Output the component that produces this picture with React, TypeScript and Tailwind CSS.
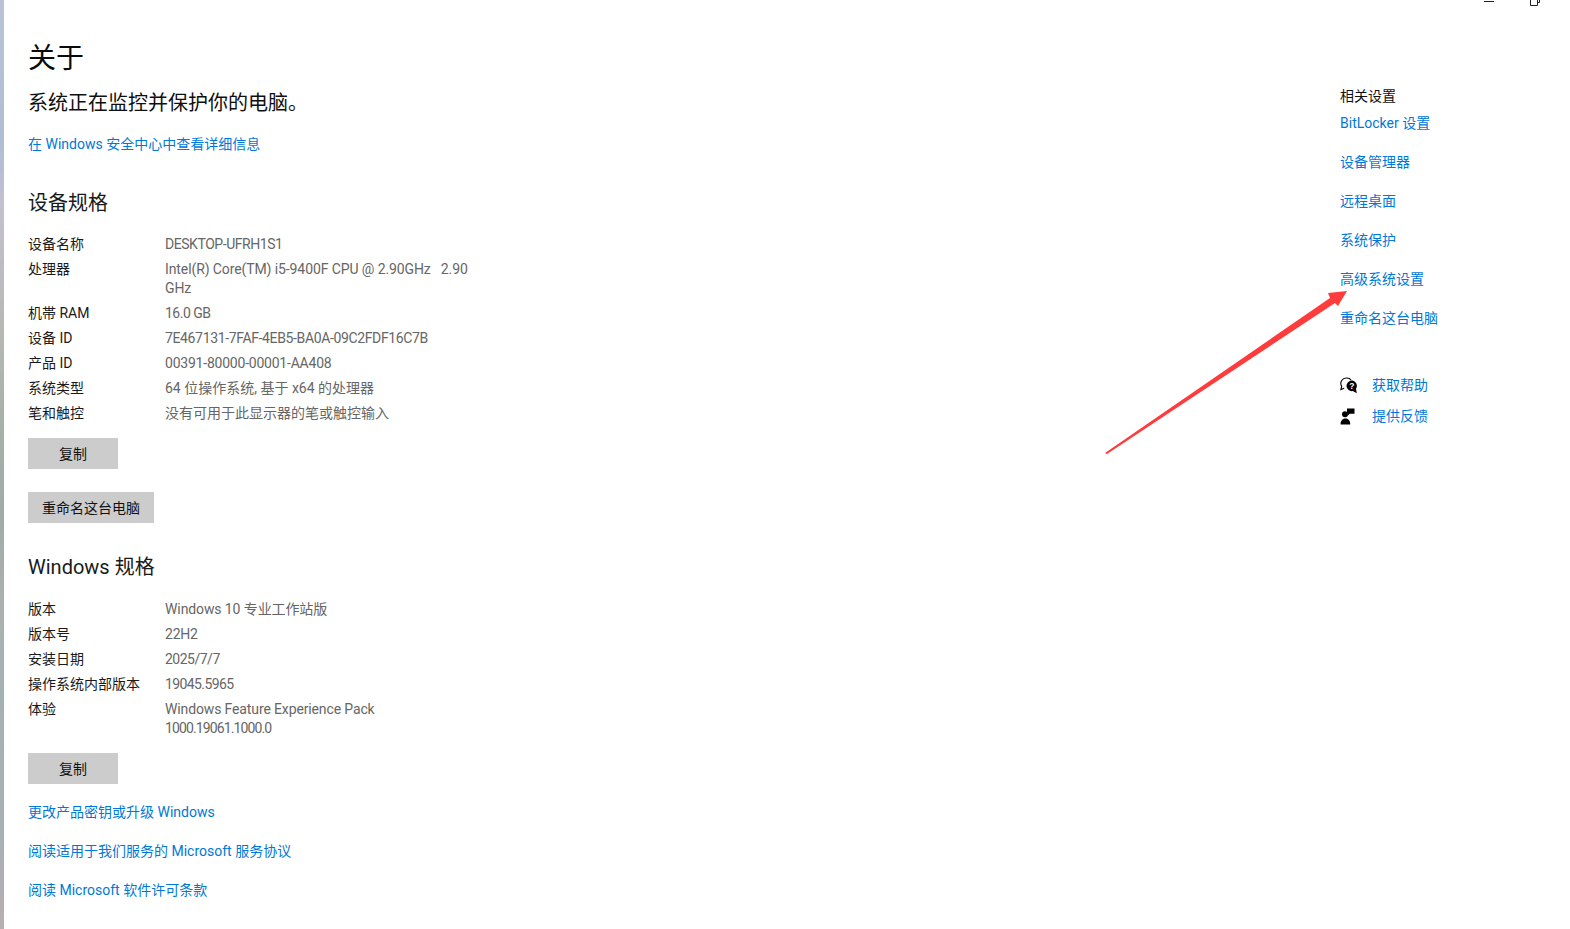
const font = { fontFamily: 'Roboto, "Noto Sans CJK SC", sans-serif' };

function Row({ k, v, track = "" }: { k: string; v: React.ReactNode; track?: string }) {
  return (
    <div className="flex text-[14px] leading-[19px] mb-[6px]">
      <div className="w-[137px] shrink-0 text-[#1a1a1a]">{k}</div>
      <div className={"w-[310px] whitespace-pre-wrap text-[#666666] " + track}>{v}</div>
    </div>
  );
}

function Link({ children, className = "" }: { children: React.ReactNode; className?: string }) {
  return <div className={"text-[14px] leading-[19px] text-[#0078d7] " + className}>{children}</div>;
}

function Btn({ children, className = "" }: { children: React.ReactNode; className?: string }) {
  return (
    <div className={"h-[31px] bg-[#cccccc] flex items-center justify-center pt-[2px] text-[14px] text-[#111111] " + className}>
      {children}
    </div>
  );
}

export default function App() {
  return (
    <div style={font} className="relative h-[929px] w-full overflow-hidden bg-white flex">
      <div className="w-1 shrink-0 bg-[linear-gradient(to_bottom,#b9c3d3_0%,#afbdd6_15%,#c4c0cf_22%,#b8b8b6_35%,#a6b2aa_45%,#a1aaa8_55%,#adb0b0_65%,#a4b1b2_75%,#a9b0b4_90%,#b7aeb2_100%)]" />
      <main className="flex-1 pl-6 pt-[39px]">
        <h1 className="text-[28px] leading-[40px] text-[#0a0a0a]">关于</h1>
        <p className="mt-[11px] text-[20px] leading-[27px] text-[#0f0f0f]">系统正在监控并保护你的电脑。</p>
        <Link className="mt-[18px]">在 Windows 安全中心中查看详细信息</Link>
        <h2 className="mt-[36px] text-[20px] leading-[27px] text-[#1a1a1a]">设备规格</h2>
        <div className="mt-[18px]">
          <Row k="设备名称" v="DESKTOP-UFRH1S1" track="tracking-[-0.45px]" />
          <Row k="处理器" v="Intel(R) Core(TM) i5-9400F CPU @ 2.90GHz   2.90 GHz" track="tracking-[-0.1px]" />
          <Row k="机帯 RAM" v="16.0 GB" track="tracking-[-0.5px]" />
          <Row k="设备 ID" v="7E467131-7FAF-4EB5-BA0A-09C2FDF16C7B" track="tracking-[-0.36px]" />
          <Row k="产品 ID" v="00391-80000-00001-AA408" track="tracking-[-0.22px]" />
          <Row k="系统类型" v="64 位操作系统, 基于 x64 的处理器" />
          <Row k="笔和触控" v="没有可用于此显示器的笔或触控输入" />
        </div>
        <Btn className="mt-[15px] w-[90px]">复制</Btn>
        <Btn className="mt-[23px] w-[126px]">重命名这台电脑</Btn>
        <h2 className="mt-[31px] text-[20px] leading-[27px] text-[#1a1a1a]">Windows 规格</h2>
        <div className="mt-[19px]">
          <Row k="版本" v="Windows 10 专业工作站版" track="tracking-[-0.1px]" />
          <Row k="版本号" v="22H2" track="tracking-[-0.2px]" />
          <Row k="安装日期" v="2025/7/7" track="tracking-[-0.5px]" />
          <Row k="操作系统内部版本" v="19045.5965" track="tracking-[-0.6px]" />
          <Row
            k="体验"
            v={
              <>
                <span className="tracking-[-0.13px]">Windows Feature Experience Pack</span>
                <br />
                <span className="tracking-[-0.88px]">1000.19061.1000.0</span>
              </>
            }
          />
        </div>
        <Btn className="mt-[15px] w-[90px]">复制</Btn>
        <Link className="mt-[19px]">更改产品密钥或升级 Windows</Link>
        <Link className="mt-[20px]">阅读适用于我们服务的 Microsoft 服务协议</Link>
        <Link className="mt-[20px]">阅读 Microsoft 软件许可条款</Link>
      </main>
      <aside className="w-[230px] shrink-0 pt-[87px]">
        <div className="text-[14px] leading-[19px] text-[#111111]">相关设置</div>
        <div className="mt-[8px] flex flex-col gap-[20px]">
          <Link>BitLocker 设置</Link>
          <Link>设备管理器</Link>
          <Link>远程桌面</Link>
          <Link>系统保护</Link>
          <Link>高级系统设置</Link>
          <Link>重命名这台电脑</Link>
        </div>
        <div className="mt-[48px] flex items-center gap-[14px]">
          <svg width="18" height="17" viewBox="0 0 18 17">
            <path d="M7 1a5.5 5.5 0 0 0-5.3 8.4L.8 12.6l3.4-1.3" fill="none" stroke="#000" strokeWidth="1.1" />
            <path d="M7 1c1.8 0 3.2.8 4.1 2.2" fill="none" stroke="#000" strokeWidth="1.1" />
            <path d="M12 3.6a5.3 5.3 0 0 1 4 8.2l.8 4.4-4-2.1A5.3 5.3 0 1 1 12 3.6z" fill="#000" />
            <text x="11.8" y="12" textAnchor="middle" fontSize="8.5" fontWeight="700" fill="#fff" fontFamily="Liberation Sans">?</text>
          </svg>
          <Link>获取帮助</Link>
        </div>
        <div className="mt-[12px] flex items-center gap-[14px]">
          <svg width="18" height="17" viewBox="0 0 18 17">
            <circle cx="5" cy="6.2" r="3" fill="#000" />
            <path d="M.6 16.5c-.2-3.6 1.8-6 4.8-6s5 2.4 4.8 6z" fill="#000" />
            <path d="M7 .5h7.5v5.2H9.9L7.5 7.8l.4-2.9H7z" fill="#000" />
          </svg>
          <Link>提供反馈</Link>
        </div>
      </aside>

      <svg className="absolute left-[1480px] top-0" width="60" height="8" viewBox="0 0 60 8">
        <path d="M4 1.5h10" stroke="#222" strokeWidth="1" fill="none" />
        <path d="M50.5 0v5.5h7V0M57.5 2.5h2V0" stroke="#222" strokeWidth="1" fill="none" />
      </svg>

      <svg className="absolute left-[1100px] top-[285px]" width="250" height="175" viewBox="0 0 250 175">
        <path d="M5 168 L7 169 L235 18 L238 21 L247 6 L228 8 L230 13 Z" fill="#ff3b3b" />
      </svg>
    </div>
  );
}
